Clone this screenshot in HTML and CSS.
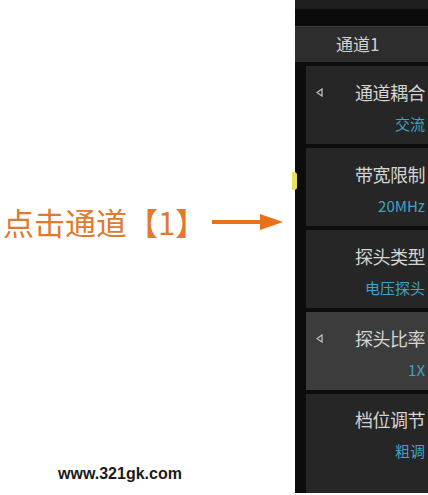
FILE: index.html
```html
<!DOCTYPE html>
<html lang="zh-CN">
  <head>
    <meta charset="utf-8">
    <meta name="viewport" content="width=device-width">
    <title>通道1 菜单</title>
    <link rel="stylesheet" href="styles.css">
  </head>
<body>
  <div class="left">
    <div class="callout">
      <span class="callout-text">点击通道【1】</span>
      <svg class="callout-arrow" width="72" height="20" viewBox="0 0 72 20">
        <rect x="0" y="8" width="50" height="4" fill="#e8711c"/>
        <polygon points="48,2 71,10 48,18" fill="#e8711c"/>
      </svg>
    </div>
    <div class="site">www.321gk.com</div>
  </div>

  <div class="panel">
    <div class="top-bar"></div>
    <div class="top-gap"></div>
    <div class="header">通道1</div>
    <div class="panel-body">
      <div class="rail"><span class="rail-mark"></span></div>
      <div class="items">
        <div class="item">
          <div class="item-row">
            <svg class="tri" width="7" height="9" viewBox="0 0 7 9"><polygon points="6,1 1,4.5 6,8" fill="none" stroke="#bdbdbd" stroke-width="1.3"/></svg>
            <span class="item-title">通道耦合</span>
          </div>
          <div class="item-value">交流</div>
        </div>
        <div class="item">
          <div class="item-row">
            <span class="item-title">带宽限制</span>
          </div>
          <div class="item-value">20MHz</div>
        </div>
        <div class="item">
          <div class="item-row">
            <span class="item-title">探头类型</span>
          </div>
          <div class="item-value">电压探头</div>
        </div>
        <div class="item active">
          <div class="item-row">
            <svg class="tri" width="7" height="9" viewBox="0 0 7 9"><polygon points="6,1 1,4.5 6,8" fill="none" stroke="#bdbdbd" stroke-width="1.3"/></svg>
            <span class="item-title">探头比率</span>
          </div>
          <div class="item-value">1X</div>
        </div>
        <div class="item last">
          <div class="item-row">
            <span class="item-title">档位调节</span>
          </div>
          <div class="item-value">粗调</div>
        </div>
      </div>
    </div>
  </div>
</body>
</html>
```

FILE: styles.css
```css
body {
  margin: 0;
  width: 428px;
  height: 495px;
  background: #fff;
  display: flex;
  font-family: "Noto Sans CJK SC", "Noto Sans", sans-serif;
  overflow: hidden;
}

.left {
  width: 295px;
  display: flex;
  flex-direction: column;
  padding-top: 202px;
  box-sizing: border-box;
}

.callout {
  height: 40px;
  display: flex;
  align-items: center;
  padding-left: 3px;
}

.callout-text {
  font-size: 31px;
  line-height: 40px;
  color: #e07a2c;
  white-space: nowrap;
}

.callout-arrow {
  margin-left: 6px;
  flex: none;
}

.site {
  margin-top: 222px;
  padding-left: 58px;
  font-family: "Liberation Sans", Arial, sans-serif;
  font-weight: bold;
  font-size: 16px;
  line-height: 20px;
  color: #1a1a1a;
}

.panel {
  width: 133px;
  height: 493px;
  background: #0d0d0d;
  display: flex;
  flex-direction: column;
}

.top-bar {
  height: 9px;
  background: #1e1e1e;
}

.top-gap {
  height: 17px;
  background: #0b0b0b;
}

.header {
  height: 36px;
  background: #2d2d2d;
  border-top: 1px solid #3b3b3b;
  box-sizing: border-box;
  color: #d2d2d2;
  font-size: 17px;
  line-height: 34px;
  padding-left: 41px;
}

.panel-body {
  flex: 1;
  display: flex;
  margin-top: 4px;
  min-height: 0;
}

.rail {
  width: 11px;
  background: #0c0c0c;
  position: relative;
}

.rail-mark {
  position: absolute;
  left: -3px;
  top: 106px;
  width: 5px;
  height: 18px;
  border-radius: 0 3px 3px 0;
  background: #e8e25a;
}

.items {
  flex: 1;
  display: flex;
  flex-direction: column;
  gap: 4px;
}

.item {
  height: 78px;
  background: #262626;
  padding: 15px 3px 0 10px;
  box-sizing: border-box;
  flex: none;
}

.item.active {
  background: #3c3c3c;
  margin-left: -2px;
  padding-left: 12px;
}

.item.last {
  flex: 1;
  padding-top: 14px;
}

.item-row {
  display: flex;
  align-items: center;
  height: 22px;
}

.tri {
  flex: none;
}

.item-title {
  margin-left: auto;
  font-size: 18px;
  line-height: 22px;
  color: #d4d4d4;
  letter-spacing: -0.5px;
}

.item-value {
  margin-top: 11px;
  text-align: right;
  font-size: 15px;
  line-height: 20px;
  color: #3fa3c6;
}
```
